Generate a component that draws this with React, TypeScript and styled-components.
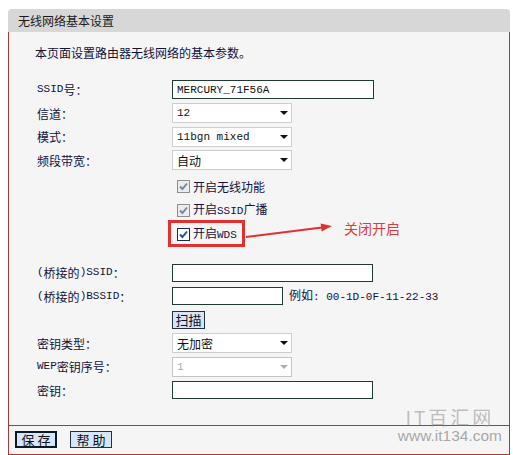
import React from "react";
import styled, { createGlobalStyle } from "styled-components";

const Global = createGlobalStyle`
  html, body { margin: 0; padding: 0; background: #ffffff; }
  body {
    font-family: "Noto Sans CJK SC", sans-serif;
    font-size: 12px;
    color: #12123a;
  }
`;

const RED = "#a83a3a";

const Page = styled.div`
  padding: 9px 3px 0 8px;
`;

const Panel = styled.div`
  position: relative;
  width: 502px;
`;

const Header = styled.div`
  height: 23px;
  line-height: 23px;
  padding-left: 10px;
  background: #d7d7d7;
  border-radius: 4px 4px 0 0;
  color: #1b1b1b;
  font-size: 12px;
`;

const Body = styled.div`
  background: #f5f5f5;
  border-left: 1px solid ${RED};
  border-right: 1px solid ${RED};
  padding: 12px 0 23px 26px;
`;

const Intro = styled.div`
  line-height: 17px;
`;

const Form = styled.div`
  margin-top: 17px;
  padding-left: 2px;
  display: flex;
  flex-direction: column;
`;

const Row = styled.div<{ $h: number; $gapTop?: number }>`
  display: grid;
  grid-template-columns: 135px 1fr;
  height: ${(p) => p.$h}px;
  margin-top: ${(p) => p.$gapTop ?? 0}px;
`;

const Label = styled.div`
  display: flex;
  align-items: center;
  line-height: 17px;
  white-space: nowrap;
`;

const Control = styled.div`
  position: relative;
  display: flex;
  align-items: center;
  white-space: nowrap;
`;

const Mono = styled.span`
  font-family: "Liberation Mono", monospace;
  font-size: 11px;
`;

const TextField = styled.input<{ $w: number; $h?: number }>`
  box-sizing: border-box;
  display: block;
  width: ${(p) => p.$w}px;
  height: ${(p) => p.$h ?? 19}px;
  margin: 0;
  padding: 0 4px;
  border: 1px solid #1f3a2e;
  border-radius: 0;
  background: #ffffff;
  font-family: "Liberation Mono", monospace;
  font-size: 11px;
  color: #111111;
  outline: none;
`;

const SelectWrap = styled.div<{ $disabled?: boolean }>`
  position: relative;
  box-sizing: border-box;
  width: 120px;
  height: 20px;
  border: 1px solid ${(p) => (p.$disabled ? "#c4c4c4" : "#cdcdcd")};
  background: #ffffff;
`;

const SelectEl = styled.select<{ $mono?: boolean }>`
  appearance: none;
  -webkit-appearance: none;
  display: block;
  width: 100%;
  height: 100%;
  margin: 0;
  padding: 0 0 0 4px;
  border: 0;
  background: transparent;
  outline: none;
  font-family: ${(p) =>
    p.$mono ? `"Liberation Mono", monospace` : `"Noto Sans CJK SC", sans-serif`};
  font-size: ${(p) => (p.$mono ? 11 : 12)}px;
  color: #111111;
  &:disabled {
    color: #a8a8a8;
    opacity: 1;
  }
`;

const Caret = styled.svg`
  position: absolute;
  right: 3px;
  top: 50%;
  margin-top: -2px;
  pointer-events: none;
`;

const CheckItem = styled.label`
  display: inline-flex;
  align-items: center;
  gap: 3px;
  margin-left: 5px;
  line-height: 17px;
`;

const Box = styled.span<{ $active?: boolean }>`
  box-sizing: border-box;
  width: 13px;
  height: 13px;
  display: flex;
  align-items: center;
  justify-content: center;
  border: 1px solid ${(p) => (p.$active ? "#1c2a4a" : "#8e8e8e")};
  background: ${(p) => (p.$active ? "#ffffff" : "#ececec")};
`;

const Mark = styled.span`
  position: absolute;
  left: -4px;
  top: -2px;
  box-sizing: border-box;
  width: 77px;
  height: 27px;
  border: 3px solid #e3302f;
  pointer-events: none;
`;

const Pointer = styled.svg`
  position: absolute;
  left: 73px;
  top: -4px;
  pointer-events: none;
`;

const Note = styled.span`
  position: absolute;
  left: 172px;
  top: -4px;
  font-size: 14px;
  line-height: 20px;
  color: #e03b3b;
`;

const Hint = styled.span`
  margin-left: 6px;
  line-height: 17px;
`;

const Button = styled.button<{ $w: number; $h: number; $strong?: boolean }>`
  box-sizing: border-box;
  width: ${(p) => p.$w}px;
  height: ${(p) => p.$h}px;
  margin: 0;
  padding: 0;
  background: #d6e6f6;
  border: ${(p) => (p.$strong ? "2px solid #0b1a28" : "1px solid #22303f")};
  border-radius: 0;
  font-family: "Noto Sans CJK SC", sans-serif;
  font-size: 13px;
  line-height: 1;
  color: #101020;
  white-space: pre;
`;

const Footer = styled.div`
  display: flex;
  align-items: flex-start;
  gap: 13px;
  height: 23px;
  padding: 5px 0 0 6px;
  background: #f5f5f5;
  border: 1px solid ${RED};
`;

const Watermark = styled.div`
  position: absolute;
  right: 8px;
  top: 398px;
  display: flex;
  flex-direction: column;
  align-items: center;
  gap: 1px;
  pointer-events: none;
`;

const WatermarkTitle = styled.span`
  font-family: "Noto Sans CJK SC", sans-serif;
  font-size: 19px;
  line-height: 20px;
  letter-spacing: 3px;
  color: rgba(150, 150, 150, 0.6);
`;

const WatermarkUrl = styled.span`
  font-family: "Liberation Sans", Arial, sans-serif;
  font-size: 15.5px;
  line-height: 16px;
  color: rgba(140, 140, 140, 0.75);
`;

function Select({
  value,
  mono,
  disabled,
}: {
  value: string;
  mono?: boolean;
  disabled?: boolean;
}) {
  return (
    <SelectWrap $disabled={disabled}>
      <SelectEl $mono={mono} disabled={disabled} defaultValue={value}>
        <option value={value}>{value}</option>
      </SelectEl>
      <Caret width="8" height="4" viewBox="0 0 8 4">
        <path d="M0 0 H8 L4 4 Z" fill={disabled ? "#b0b0b0" : "#111"} />
      </Caret>
    </SelectWrap>
  );
}

function Check({ active, children }: { active?: boolean; children: React.ReactNode }) {
  return (
    <CheckItem>
      <Box $active={active}>
        <svg width="9" height="9" viewBox="0 0 9 9">
          <path
            d="M1 4.5 L3.4 7 L8 1.5"
            fill="none"
            stroke={active ? "#1d4f9c" : "#7486a6"}
            strokeWidth="1.9"
          />
        </svg>
      </Box>
      <span>{children}</span>
    </CheckItem>
  );
}

export default function App() {
  return (
    <>
      <Global />
      <Page>
        <Panel>
          <Header>无线网络基本设置</Header>
          <Body>
            <Intro>本页面设置路由器无线网络的基本参数。</Intro>
            <Form>
              <Row $h={23.5}>
                <Label>
                  <Mono>SSID</Mono>号：
                </Label>
                <Control>
                  <TextField $w={202} defaultValue="MERCURY_71F56A" />
                </Control>
              </Row>
              <Row $h={23.5}>
                <Label>信道：</Label>
                <Control>
                  <Select value="12" mono />
                </Control>
              </Row>
              <Row $h={23.5}>
                <Label>模式：</Label>
                <Control>
                  <Select value="11bgn mixed" mono />
                </Control>
              </Row>
              <Row $h={23.5}>
                <Label>频段带宽：</Label>
                <Control>
                  <Select value="自动" />
                </Control>
              </Row>

              <Row $h={24} $gapTop={2}>
                <Label />
                <Control>
                  <Check>开启无线功能</Check>
                </Control>
              </Row>
              <Row $h={24}>
                <Label />
                <Control>
                  <Check>
                    开启<Mono>SSID</Mono>广播
                  </Check>
                </Control>
              </Row>
              <Row $h={24}>
                <Label />
                <Control>
                  <Check active>
                    开启<Mono>WDS</Mono>
                  </Check>
                  <Mark />
                  <Pointer width="90" height="24" viewBox="0 0 90 24">
                    <line x1="1" y1="19" x2="77" y2="9.5" stroke="#e3302f" strokeWidth="2" />
                    <polygon points="87,8 76.6,13.4 75.6,5.4" fill="#e3302f" />
                  </Pointer>
                  <Note>关闭开启</Note>
                </Control>
              </Row>

              <Row $h={23.5} $gapTop={15}>
                <Label>
                  <Mono>(</Mono>桥接的<Mono>)SSID</Mono>：
                </Label>
                <Control>
                  <TextField $w={201} $h={18} />
                </Control>
              </Row>
              <Row $h={23.5}>
                <Label>
                  <Mono>(</Mono>桥接的<Mono>)BSSID</Mono>：
                </Label>
                <Control>
                  <TextField $w={111} $h={18} />
                  <Hint>
                    例如<Mono>: 00-1D-0F-11-22-33</Mono>
                  </Hint>
                </Control>
              </Row>
              <Row $h={23.5}>
                <Label />
                <Control>
                  <Button $w={33} $h={18}>
                    扫描
                  </Button>
                </Control>
              </Row>
              <Row $h={23.5}>
                <Label>密钥类型：</Label>
                <Control>
                  <Select value="无加密" />
                </Control>
              </Row>
              <Row $h={23.5}>
                <Label>
                  <Mono>WEP</Mono>密钥序号：
                </Label>
                <Control>
                  <Select value="1" mono disabled />
                </Control>
              </Row>
              <Row $h={23.5}>
                <Label>密钥：</Label>
                <Control>
                  <TextField $w={201} $h={18} />
                </Control>
              </Row>
            </Form>
          </Body>
          <Footer>
            <Button $w={42} $h={17} $strong>
              保 存
            </Button>
            <Button $w={42} $h={17}>
              帮 助
            </Button>
          </Footer>
          <Watermark>
            <WatermarkTitle>IT百汇网</WatermarkTitle>
            <WatermarkUrl>www.it134.com</WatermarkUrl>
          </Watermark>
        </Panel>
      </Page>
    </>
  );
}
